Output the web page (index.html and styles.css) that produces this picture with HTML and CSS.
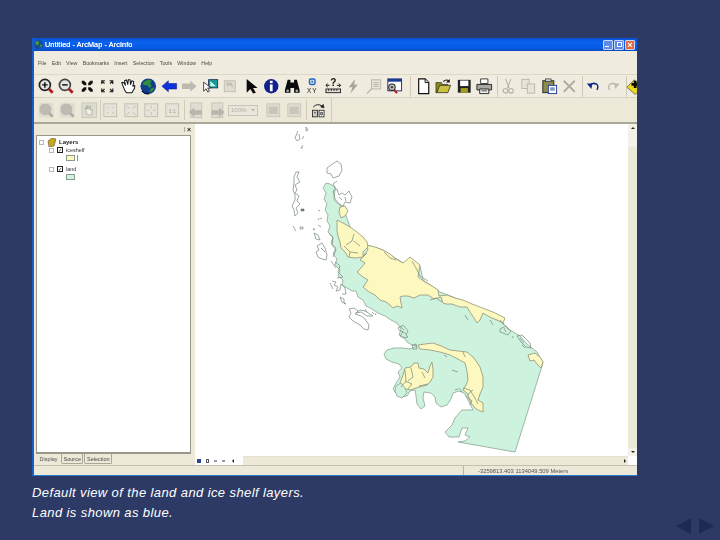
FILE: index.html
```html
<!DOCTYPE html>
<html lang="en">
<head>
<meta charset="utf-8">
<title>Default view</title>
<link rel="stylesheet" href="styles.css">
</head>
<body>
<main class="slide">
  <section class="window">
    <header class="titlebar">
      <svg class="appicon" viewBox="0 0 12 12"><circle cx="6" cy="6" r="5" fill="#1b4a8c"/><path d="M2 4 5 2 7 4 5 7 3 6ZM8 6l2 0-1 3-2 0Z" fill="#3f9a4a"/></svg>
      <span class="title">Untitled - ArcMap - ArcInfo</span>
      <div class="winbtns">
        <span class="winbtn"><i class="min"></i></span>
        <span class="winbtn"><i class="max"></i></span>
        <span class="winbtn close"><i class="x">×</i></span>
      </div>
    </header>
    <nav class="menubar">
      <span>File</span><span>Edit</span><span>View</span><span>Bookmarks</span><span>Insert</span><span>Selection</span><span>Tools</span><span>Window</span><span>Help</span>
    </nav>
    <div class="toolbar main-tools">
      <span class="tool"><svg viewBox="0 0 18 18"><circle cx="7.500" cy="7.500" r="6" fill="#e4e4e0" stroke="#222" stroke-width="1.800"/><path d="M4.500 7.500h6M7.500 4.500v6" stroke="#111" stroke-width="1.600"/><path d="M12 12l4 4" stroke="#b01c1c" stroke-width="3"/></svg></span>
      <span class="tool"><svg viewBox="0 0 18 18"><circle cx="7.500" cy="7.500" r="6" fill="#e4e4e0" stroke="#444" stroke-width="1.800"/><path d="M4.500 7.500h6" stroke="#111" stroke-width="1.600"/><path d="M12 12l4 4" stroke="#b01c1c" stroke-width="3"/></svg></span>
      <span class="tool"><svg viewBox="0 0 18 18" fill="#111"><path d="M3 3h2.500L8 5.500V8H5.500L3 5.500ZM15 3h-2.500L10 5.500V8h2.500L15 5.500ZM3 15h2.500L8 12.500V10H5.500L3 12.500ZM15 15h-2.500L10 12.500V10h2.500L15 12.500Z"/></svg></span>
      <span class="tool"><svg viewBox="0 0 18 18" fill="none" stroke="#222" stroke-width="1.300"><path d="M3 6.500V3h3.500M3 3l3 3M15 6.500V3h-3.500M15 3l-3 3M3 11.500V15h3.500M3 15l3-3M15 11.500V15h-3.500M15 15l-3-3"/></svg></span>
      <span class="tool"><svg viewBox="0 0 18 18"><path d="M3 8 2 5 4 5 6 8 5 3 7 2 8.500 7 9 2 11 2 11.500 7 13 3 15 4 14 9 16 8 16 11 13 16H7L5 13Z" fill="#fff" stroke="#111" stroke-width="1.100" stroke-linejoin="round"/></svg></span>
      <span class="tool"><svg viewBox="0 0 18 18"><circle cx="9" cy="9" r="8.500" fill="#123c8c"/><path d="M4 4 9 1.500 13 3 11 6 13 9 10 11 8 8 5 8 3 7ZM11 12l4-2 .5 2-3 3-2 0Z" fill="#2f8f3f"/><path d="M2 14a8.500 8.500 0 0 0 8 3" stroke="#050f3a" fill="none" stroke-width="1.500"/></svg></span>
      <span class="tool"><svg viewBox="0 0 18 18"><path d="M1 9 8 3v3h9v6H8v3Z" fill="#1133dd" stroke="#0b1f88" stroke-width=".6"/></svg></span>
      <span class="tool"><svg viewBox="0 0 18 18"><path d="M17 9 10 3v3H1v6h9v3Z" fill="#bdbbb0"/></svg></span>
      <span class="tool"><svg viewBox="0 0 20 18"><rect x="8" y="1" width="11" height="10" fill="#1a9a9a" stroke="#123050"/><path d="M10 3l7 6H10Z" fill="#cfe"/><path d="M2 4v11l3-3 2 4 2-1-2-4h4Z" fill="#fff" stroke="#111" stroke-width=".9"/></svg></span>
      <span class="tool"><svg viewBox="0 0 18 18"><rect x="2.500" y="3" width="12" height="12" fill="#dedcd0" stroke="#c0beb2"/><path d="M5 5h6l1 6-3-3-4 1Z" fill="#c4c2b6"/></svg></span>
      <span class="tool"><svg viewBox="0 0 18 18"><path d="M4 1v15l4-4 3 5 3-1-3-5h5Z" fill="#0c0c0c"/></svg></span>
      <span class="tool"><svg viewBox="0 0 18 18"><circle cx="9" cy="9" r="7.800" fill="#10208c"/><rect x="7.500" y="3" width="3" height="2.600" fill="#fff"/><rect x="7.500" y="7" width="3" height="7.500" fill="#fff"/></svg></span>
      <span class="tool"><svg viewBox="0 0 18 18" fill="#0c0c0c"><path d="M4 2h3v3h4V2h3l3 11v3h-6v-5H7v5H1v-3Z"/><circle cx="4" cy="14" r="1.500" fill="#aaa"/><circle cx="14" cy="14" r="1.500" fill="#aaa"/></svg></span>
      <span class="tool"><svg viewBox="0 0 18 18"><rect x="6" y="1" width="6" height="6" rx="1.500" fill="none" stroke="#1f62c8" stroke-width="1.600"/><rect x="8" y="3" width="2" height="2" fill="#1f62c8"/><text class="xy" x="9" y="16.500">XY</text></svg></span>
      <span class="tool"><svg viewBox="0 0 18 18"><text class="q" x="9" y="9">?</text><path d="M1 8h4M1 8l2-2M1 8l2 2M13 8h4M17 8l-2-2M17 8l-2 2" stroke="#111" fill="none"/><rect x="1" y="12" width="16" height="4" fill="#dcdcd0" stroke="#222"/><path d="M4 12v2M7 12v2M10 12v2M13 12v2" stroke="#222"/></svg></span>
      <span class="tool"><svg viewBox="0 0 18 18"><path d="M11 1 4 10h4L6 17l8-10h-4Z" fill="#a8a69a"/></svg></span>
      <span class="tool"><svg viewBox="0 0 18 18"><rect x="6" y="2" width="10" height="10" fill="#e8e6da" stroke="#b6b4a8"/><path d="M8 5h6M8 7h6M8 9h6" stroke="#b6b4a8"/><path d="M6 12 1 17" stroke="#bdbbb0" stroke-width="1.500"/></svg></span>
      <span class="tool"><svg viewBox="0 0 18 18"><rect x="2" y="1" width="15" height="13" fill="#fff" stroke="#1a2a6a"/><rect x="2" y="1" width="15" height="3" fill="#1a3a98"/><circle cx="6.500" cy="10" r="3.500" fill="#ddd" stroke="#222" stroke-width="1.200"/><path d="M4.800 10h3.400M6.500 8.300v3.400" stroke="#111"/><path d="M9 13l3 3.500" stroke="#b01c1c" stroke-width="2.200"/></svg></span>
      <span class="vsep tall lead"></span>
      <span class="tool"><svg viewBox="0 0 18 18"><path d="M4 1h7l4 4v12H4Z" fill="#fff" stroke="#111" stroke-width="1.300"/><path d="M11 1v4h4" fill="#ddd" stroke="#111"/></svg></span>
      <span class="tool"><svg viewBox="0 0 18 18"><path d="M1 5h6l1 2h6v2H5l-3 7H1Z" fill="#8a8a20" stroke="#222" stroke-width=".7"/><path d="M2 16 5 8h12l-3 8Z" fill="#c8c040" stroke="#222" stroke-width=".8"/><path d="M9 4q3-3 6-1" fill="none" stroke="#111" stroke-width="1.200"/><path d="M16 1v4h-4Z" fill="#111"/></svg></span>
      <span class="tool"><svg viewBox="0 0 18 18"><path d="M2 2h14v14H2Z" fill="#222"/><rect x="4.500" y="2.800" width="9" height="6" fill="#fff"/><rect x="5" y="11" width="8" height="5" fill="#a0a020"/></svg></span>
      <span class="tool"><svg viewBox="0 0 18 18"><path d="M5 1h8v5H5Z" fill="#fff" stroke="#333"/><path d="M1 7h16v6H1Z" fill="#a8a8a4" stroke="#222"/><path d="M4 12h10v5H4Z" fill="#eee" stroke="#222"/><path d="M6 14h6" stroke="#444"/></svg></span>
      <span class="vsep tall"></span>
      <span class="tool"><svg viewBox="0 0 18 18" fill="none" stroke="#b4b2a8" stroke-width="1.200"><path d="M6 1l4 10M12 1 8 11"/><circle cx="6" cy="14" r="2.500"/><circle cx="12" cy="14" r="2.500"/></svg></span>
      <span class="tool"><svg viewBox="0 0 18 18" fill="#e6e4d8" stroke="#b8b6aa"><rect x="2" y="1.500" width="8" height="10"/><rect x="8" y="6.500" width="8" height="10"/></svg></span>
      <span class="tool"><svg viewBox="0 0 18 18"><rect x="2" y="3" width="12" height="13" fill="#8c8c50" stroke="#222"/><rect x="5" y="1" width="6" height="3" fill="#ccc" stroke="#222" stroke-width=".7"/><rect x="8" y="8" width="9" height="9" fill="#fff" stroke="#1a3a98"/><path d="M10 11h5M10 13h5" stroke="#1a3a98"/></svg></span>
      <span class="tool"><svg viewBox="0 0 18 18"><path d="M3 3 15 15M15 3 3 15" stroke="#aeaca0" stroke-width="2"/></svg></span>
      <span class="vsep tall"></span>
      <span class="tool"><svg viewBox="0 0 18 18" fill="none"><path d="M5 9q3-5 8-2 2 2 0 6" stroke="#0f2a88" stroke-width="1.600"/><path d="M2 6l6 0-1 6Z" fill="#0f2a88"/></svg></span>
      <span class="tool"><svg viewBox="0 0 18 18" fill="none"><path d="M13 9q-3-5-8-2-2 2 0 6" stroke="#bdbbb0" stroke-width="1.600"/><path d="M16 6h-6l1 6Z" fill="#bdbbb0"/></svg></span>
      <span class="vsep tall"></span>
      <span class="tool clipped"><svg viewBox="0 0 18 18"><path d="M9 2 18 11 10 18 1 10Z" fill="#e8d820" stroke="#222" stroke-width=".6"/><path d="M6 7h8M10 3v8" stroke="#0a0a0a" stroke-width="3"/></svg></span>
    </div>
    <div class="toolbar sub-tools">
      <div class="subband">
        <span class="tool roomy"><svg viewBox="0 0 18 18"><rect x="1" y="1" width="16" height="16" rx="2" fill="#dedcd0"/><circle cx="8" cy="8" r="6.500" fill="#bebcb2"/><path d="M12 12l4 4" stroke="#aaa89c" stroke-width="2.500"/></svg></span>
        <span class="tool roomy"><svg viewBox="0 0 18 18"><rect x="1" y="1" width="16" height="16" rx="2" fill="#dedcd0"/><circle cx="8" cy="8" r="6.500" fill="#bebcb2"/><path d="M12 12l4 4" stroke="#aaa89c" stroke-width="2.500"/></svg></span>
        <span class="tool roomy"><svg viewBox="0 0 18 18"><rect x="1" y="1" width="16" height="16" fill="#dedcd0" stroke="#c8c6ba"/><path d="M5 9V6l1 2V4l1.500 4V3.500L9 8l1.500-4v5l2-1-1 6H7Z" fill="#f2f0e6" stroke="#aaa89c" stroke-width=".8"/></svg></span>
        <span class="vsep snug"></span>
        <span class="tool"><svg class="gframe" viewBox="0 0 18 18"><rect x="2" y="2" width="14" height="14"/><path d="M5 5l2 2M13 5l-2 2M5 13l2-2M13 13l-2-2"/></svg></span>
        <span class="tool"><svg class="gframe" viewBox="0 0 18 18"><rect x="2" y="2" width="14" height="14"/><path d="M7 7 4 4M11 7l3-3M7 11l-3 3M11 11l3 3"/></svg></span>
        <span class="tool"><svg class="gframe" viewBox="0 0 18 18"><rect x="2" y="2" width="14" height="14"/><path d="M9 4v3M9 11v3M4 9h3M11 9h3"/></svg></span>
        <span class="tool"><svg class="gframe" viewBox="0 0 18 18"><rect x="2" y="2" width="14" height="14"/><text class="oneone" x="9" y="12">1:1</text></svg></span>
        <span class="vsep"></span>
        <span class="tool"><svg viewBox="0 0 18 18"><rect x="3" y="1" width="12" height="16" fill="#e0ded2" stroke="#c4c2b6"/><path d="M1 11 7 6v3h8v5H7v3Z" fill="#b8b6aa"/></svg></span>
        <span class="tool"><svg viewBox="0 0 18 18"><rect x="3" y="1" width="12" height="16" fill="#e0ded2" stroke="#c4c2b6"/><path d="M17 11l-6-5v3H3v5h8v3Z" fill="#b8b6aa"/></svg></span>
        <span class="combo"><span class="combotext">100%</span><i class="comboarrow"></i></span>
        <span class="tool wide"><svg class="gdoc" viewBox="0 0 18 18"><rect x="2" y="2" width="14" height="14"/><rect class="bar" x="4" y="5" width="10" height="8"/></svg></span>
        <span class="tool"><svg class="gdoc" viewBox="0 0 18 18"><rect x="2" y="2" width="14" height="14"/><rect class="bar" x="4" y="5" width="10" height="8"/></svg></span>
        <span class="vsep"></span>
        <span class="tool"><svg viewBox="0 0 20 20" fill="none" stroke="#222"><path d="M4 6q5-5 11-1" stroke-width="1.200"/><path d="M17 7l-4-1 3-3Z" fill="#222"/><rect x="3" y="10" width="6" height="8" fill="#ccc"/><rect x="11" y="10" width="6" height="8" fill="#fff"/><path d="M5 13h2M13 12.500h2v3h-2Z"/></svg></span>
      </div>
    </div>
    <div class="workspace">
      <aside class="toc">
        <div class="tochead"><i class="grip"></i><b class="tocclose">×</b></div>
        <div class="tree">
          <div class="row root"><i class="exp"></i><svg class="stack" viewBox="0 0 9 9"><path d="M1 3 5 0l4 1-2 7-5 1Z" fill="#c8a818" stroke="#554" stroke-width=".6"/></svg><strong>Layers</strong></div>
          <div class="row layer"><i class="exp"></i><i class="check">✓</i><span>iceshelf</span></div>
          <div class="swatchrow"><i class="swatch ice"></i><i class="caret"></i></div>
          <div class="row layer gapped"><i class="exp"></i><i class="check">✓</i><span>land</span></div>
          <div class="swatchrow"><i class="swatch land"></i></div>
        </div>
        <div class="tabs"><span class="tab on">Display</span><span class="tab">Source</span><span class="tab">Selection</span></div>
      </aside>
      <div class="mappane">
        <div class="mapmain">
          <svg class="map" viewBox="195 124 433 332">
            <g class="coast">
              <path class="land" d="M326 183 323 188 326 193 324 199 327 204 325 210 328 215 327 221 330 226 328 232 333 237 331 243 336 248 333 254 337 259 335 265 340 270 338 276 343 280 342 285 347 288 352 291 356 291 358 297 363 300 366 306 372 309 378 313 385 316 391 320 397 323 401 329 399 335 404 337 407 342 412 345 417 346 410 349 403 348 394 348 387 350 384 354 386 359 392 362 399 364 402 368 398 372 400 377 396 383 393 389 396 393 402 397 407 396 410 391 415 390 416 396 417 404 421 409 425 406 423 398 424 392 431 393 435 397 436 403 441 407 447 405 451 399 453 393 459 391 464 393 468 400 473 410 462 410 455 418 452 425 445 432 449 437 459 437 462 428 468 428 465 435 470 437 465 441 458 442 515 452 543 363 537 352 528 345 520 336 510 330 503 323 483 312 470 305 453 297 440 292 423 280 420 266 403 263 383 250 367 245 352 232 345 213 340 205 334 200 335 187 330 184Z"/>
              <path class="ice" d="M367 245 375 247 383 250 390 254 396 259 403 263 410 257 415 261 420 265 419 271 418 277 425 282 432 286 438 290 439 296 447 295 455 298 463 300 472 304 480 307 493 312 499 315 505 318 503 323 497 320 492 318 488 316 483 313 480 320 477 323 474 318 470 312 467 307 460 307 452 304 446 304 443 303 441 297 434 299 428 295 420 295 414 298 408 296 403 296 400 297 401 303 402 308 397 306 393 308 390 305 386 302 380 300 375 295 369 292 363 287 368 280 363 277 357 272 361 268 365 263 360 260 364 255 368 250Z"/>
              <path class="ice" d="M337 220 343 223 350 227 357 232 363 237 367 242 368 247 363 252 363 257 355 258 348 257 345 252 341 248 340 242 338 236 337 230Z"/>
              <path class="ice" d="M340 207 345 206 348 211 345 216 341 218 339 212Z"/>
              <path class="ice" d="M418 345 425 344 433 343 441 346 450 350 458 351 467 352 474 358 480 367 483 377 483 387 480 394 478 400 483 403 483 412 478 410 475 408 471 403 467 393 463 390 466 385 468 380 467 371 465 363 458 359 450 355 440 352 430 350 420 349Z"/>
              <path class="ice" d="M400 383 403 375 405 368 411 367 414 363 418 363 419 368 424 369 428 373 430 366 432 362 433 370 433 377 430 382 427 385 419 387 410 390 402 388Z"/>
              <path class="ice" d="M528 355 535 353 541 358 543 362 541 368 537 364 534 360 530 361Z"/>
              <path class="land" d="M396 386 401 383 405 388 407 393 402 398 397 396 395 391Z"/>
              <path d="M354 234 352 241 346 245M354 241 360 246M344 246 350 252 358 253M350 252 349 257M367 253 363 257M384 252 390 258 396 260M412 261 417 270 420 276M420 276 428 281M405 370 406 381 401 387M405 381 412 384 408 389M411 368 413 377 408 381M419 386 428 384M422 372 425 378M430 300 436 298 442 302M452 370 458 372M459 388 462 392M466 396 472 401 470 405M463 388 470 390 475 398 478 404"/>
              <path d="M331 165 337 161 341 164 342 170 339 176 333 178 331 174 327 173 327 168Z M337 181 333 184 336 189"/>
              <path d="M298 131 295 138 297 141 300 139 299 134M306 127l2 3-2 1ZM303 145 301 148 303 148M302 139 304 136"/>
              <path d="M296 172 299 172 297 177 300 182 295 185 297 190 295 193 299 196 297 201 300 204 296 208 298 213 295 216 294 210 292 206 295 200 295 195 293 190 294 183 294 177Z"/>
              <path class="blot" d="M301 209h3v2h-3Z"/>
              <path d="M293 226 296 231M300 227 303 227 303 229 300 229ZM313 228l2 2M318 210l2 1M319 218l-1 2M320 219l2-1"/>
              <path d="M333 191 337 189 339 195 342 193 345 195 349 191 352 197 350 203 345 202 343 206 339 204 335 199Z M339 197l3 3M345 197l1 4"/>
              <path d="M314 233 318 235 320 240 316 239ZM317 246 322 243 325 248 327 255 326 260 322 259 318 257 316 252 319 250Z M321 248 325 252M318 225l3 2M313 230l2-1"/>
              <path d="M329 233 333 238 332 245 336 250 333 257M335 262 340 266 338 272 343 277 337 278M331 261 336 268"/>
              <path d="M332 281 336 282 334 285 338 287 336 291 340 290 341 284 345 288 346 294 342 294M330 283 333 289"/>
              <path d="M340 297 344 299 344 303 346 304 342 302Z"/>
              <path d="M349 309 354 308 358 311 355 314 361 316 365 319 369 325 368 330 364 329 360 325 353 321 349 317 351 313ZM356 313 360 310 365 311 370 314 373 316 367 316 361 312ZM365 309l2 3M372 312l2 2M375 315l1-2"/>
              <path d="M398 328 403 325 408 331 406 335 408 337 403 338 400 336 403 332 399 330ZM400 326l4 4M402 331l4 3"/>
              <path d="M412 345 416 344 417 349 413 349Z"/>
              <path d="M500 329 506 326 508 329 511 331 508 335 503 333 500 332ZM504 328l2 4M517 336 522 335 526 339 530 343 531 348 526 347 521 342ZM520 338l4 5M522 345 525 348M512 336l1 2"/>
              <path d="M500 320 504 325M465 315 468 320M490 320 493 325"/>
              <path d="M444 355l3 2M473 390l-3 2-2 3M463 352l2 5M455 390l3-1"/>
            </g>
          </svg>
          <div class="vscroll"><i class="up"></i><i class="thumb"></i><i class="down"></i></div>
        </div>
        <div class="hscroll">
          <div class="viewbtns"><i class="vb dot"></i><i class="vb page"></i><i class="vb rf"></i><i class="vb pz"></i><i class="vb arrow-l"></i></div>
          <div class="htrack"><i class="arrow-r"></i></div>
          <div class="corner"></div>
        </div>
      </div>
    </div>
    <footer class="status"><span class="statusleft"></span><span class="coords">-3259813.403 1134049.509 Meters</span></footer>
  </section>
  <footer class="foot">
    <p class="caption">Default view of the land and ice shelf layers.<br>Land is shown as blue.</p>
    <div class="nav"><i class="tri left"></i><i class="tri right"></i></div>
  </footer>
</main>
</body>
</html>
```
FILE: styles.css
```css
* { box-sizing: border-box; }
html, body { margin: 0; height: 100%; }
body { background: #2d3a66; overflow: hidden; font-family: "Liberation Sans", Arial, sans-serif; }
i { display: block; font-style: normal; }

.slide { width: 720px; height: 540px; padding: 38px 7px 6px 32px; display: flex; flex-direction: column; }

.window { width: 605px; height: 438px; flex: none; display: flex; flex-direction: column; background: #ece9d9; overflow: hidden; border-left: 2px solid #1a5cc4; border-bottom: 1px solid #2a7ad0; filter: blur(.45px); }

.titlebar { height: 13px; flex: none; display: flex; align-items: center; padding: 0 2px 0 0; background: linear-gradient(#0a4fcf, #0a62ee 30%, #0a5ae4 80%, #0848b8); color: #fff; margin-left: -2px; }
.appicon { width: 11px; height: 11px; flex: none; margin: 0 1px 0 1px; }
.title { font-size: 7.200px; letter-spacing: .13px; white-space: nowrap; color: #fff; text-shadow: 0 0 .4px #fff; }
.winbtns { margin-left: auto; display: flex; gap: 1px; }
.winbtn { width: 10px; height: 10px; background: #5c8ae6; border: 1px solid #c8d8f8; border-radius: 1px; display: flex; align-items: center; justify-content: center; }
.winbtn.close { background: #df6b3e; }
.min { width: 4px; height: 1.500px; background: #fff; margin-top: 4px; margin-right: 2px; }
.max { width: 5px; height: 5px; border: 1px solid #fff; }
.x { font-size: 9px; line-height: 8px; color: #fff; font-weight: bold; }

.menubar { height: 24px; flex: none; display: flex; align-items: center; gap: 5.200px; padding: 0 0 0 4px; font-size: 5.300px; color: #4a4a44; border-bottom: 1px solid #dcd8c6; background: #efebde; }

.toolbar { flex: none; display: flex; align-items: center; overflow: hidden; padding-left: 1.500px; border-bottom: 1px solid #d8d4c2; }
.main-tools { height: 23px; background: #f0ecdf; padding-top: 1px; }
.sub-tools { height: 26px; border-bottom: 2px solid #aca899; padding-left: 1px; }
.subband { display: flex; align-items: center; height: 100%; padding-right: 2px; border-right: 1px solid #cfcbb8; }
.tool { width: 20.500px; height: 20px; flex: none; display: flex; align-items: center; justify-content: center; }
.tool svg { width: 16.500px; height: 16.500px; display: block; overflow: visible; }
.tool.roomy { width: 21.500px; }
.tool.wide { margin-left: 5px; }
.tool.clipped { margin-left: -3px; }
.vsep { width: 1px; height: 20px; margin: 0 1.500px; background: #cfcbb8; flex: none; }
.vsep.snug { margin: 0 -1px 0 .5px; }
.vsep.tall { height: 22px; margin: 0 0 0 2px; }
.vsep.tall.lead { margin: 0 2px 0 5px; }

.xy { font: 7px "Liberation Sans", sans-serif; fill: #222; text-anchor: middle; letter-spacing: 1px; }
.q { font: bold 11px "Liberation Sans", sans-serif; fill: #111; text-anchor: middle; }
.oneone { font: 6px "Liberation Sans", sans-serif; fill: #a8a69a; text-anchor: middle; stroke: none; }
.gframe { fill: #e6e4d8; stroke: #bebcb0; }
.gdoc { fill: #dedcd0; stroke: #c8c6ba; }
.gdoc .bar { fill: #c8c6ba; stroke: none; }

.combo { width: 30px; height: 11px; flex: none; margin-left: 1px; border: 1px solid #c8c6ba; background: #e8e6da; display: flex; align-items: center; justify-content: space-between; font-size: 6px; color: #b4b2a6; padding: 0 2px; }
.comboarrow { width: 0; height: 0; border: 2.500px solid transparent; border-top-color: #aeaca0; margin-top: 2px; }

.workspace { flex: 1; min-height: 0; display: flex; }

.toc { width: 161px; flex: none; display: flex; flex-direction: column; padding: 0 4px 0 2px; background: #ece9d9; }
.tochead { height: 11px; flex: none; display: flex; align-items: center; justify-content: flex-end; gap: 2px; }
.grip { width: 1px; height: 5px; background: #b0ac9a; }
.tocclose { font-size: 7px; line-height: 7px; color: #222; }
.tree { flex: 1; min-height: 0; background: #fff; border: 1px solid #9a978a; border-bottom-width: 2px; padding: 2px 0 0 2px; font-size: 5.500px; color: #333; }
.row { display: flex; align-items: center; height: 8px; gap: 3px; }
.exp { width: 5px; height: 5px; border: 1px solid #b8b8b0; flex: none; }
.stack { width: 9px; height: 9px; flex: none; }
.root strong { font-size: 6px; color: #222; }
.layer { padding-left: 10px; }
.gapped { margin-top: 4px; }
.check { width: 6px; height: 6px; border: 1px solid #222; flex: none; font-size: 5px; line-height: 5px; text-align: center; color: #111; }
.swatchrow { display: flex; align-items: center; height: 7px; gap: 2px; padding: 1px 0 0 27px; }
.swatch { width: 9px; height: 6px; border: 1px solid #8a9a8c; }
.swatch.ice { background: #fdf8bf; }
.swatch.land { background: #cdf2de; }
.caret { width: 1px; height: 6px; background: #6f95cf; }

.tabs { height: 11px; flex: none; display: flex; gap: 1px; padding: 0 0 1px 1px; font-size: 5.500px; color: #444; }
.tab { height: 10px; padding: 0 1.500px; display: flex; align-items: center; border: 1px solid #aaa794; border-top: 0; border-radius: 0 0 2px 2px; background: #ece9d9; }
.tab.on { border-color: transparent; color: #555; }

.mappane { flex: 1; min-width: 0; display: flex; flex-direction: column; }
.mapmain { flex: 1; min-height: 0; display: flex; }
.map { width: 433px; height: 332px; flex: none; display: block; background: #fff; }
.coast path { fill: none; stroke: #7e8e80; stroke-width: .75; stroke-linejoin: round; }
.coast .land { fill: #cdf2de; stroke: #87a090; }
.coast .ice { fill: #fdf8bf; stroke: #8b8f72; }
.coast .blot { fill: #666; }

.vscroll { flex: 1; display: flex; flex-direction: column; background: #f4f2e8; align-items: center; }
.up { width: 0; height: 0; border: 2.500px solid transparent; border-bottom-color: #222; margin-top: 1px; }
.thumb { flex: 1; width: 100%; background: #ece9d9; margin-top: 18px; }
.down { width: 0; height: 0; border: 2.500px solid transparent; border-top-color: #222; margin: 3px 0 1px; }

.hscroll { height: 9px; flex: none; display: flex; align-items: stretch; }
.viewbtns { width: 48px; flex: none; background: #fff; display: flex; align-items: center; gap: 5px; padding-left: 2px; }
.vb { width: 3px; height: 4px; background: #556; }
.vb.dot { background: #2a4a88; width: 4px; }
.vb.page { background: none; border: 1px solid #556; }
.vb.rf, .vb.pz { background: #99a; height: 2px; }
.vb.arrow-l { width: 0; height: 0; background: none; border: 2px solid transparent; border-right-color: #222; }
.htrack { flex: 1; display: flex; align-items: center; justify-content: flex-end; padding-right: 3px; background: #ece9d9; border-top: 1px solid #e4e1d0; }
.arrow-r { width: 0; height: 0; border: 2.500px solid transparent; border-left-color: #222; margin-right: -3px; }
.corner { width: 9px; flex: none; background: #fff; }

.status { height: 10px; flex: none; display: flex; align-items: center; border-top: 1px solid #c4c0ae; font-size: 5.800px; color: #555; background: #ece9d9; white-space: nowrap; }
.statusleft { width: 430px; height: 100%; flex: none; border-right: 1px solid #b8b4a2; }
.coords { padding-left: 14px; }

.foot { flex: 1; display: flex; justify-content: space-between; align-items: flex-end; }
.caption { margin: 0; align-self: flex-start; padding-top: 7px; font-size: 13px; line-height: 20px; font-style: italic; color: #fff; letter-spacing: .4px; }
.nav { display: flex; gap: 8px; margin-right: -1px; }
.tri { width: 0; height: 0; border-top: 8px solid transparent; border-bottom: 8px solid transparent; }
.tri.left { border-right: 15px solid #1f2a52; }
.tri.right { border-left: 15px solid #1f2a52; }
```
